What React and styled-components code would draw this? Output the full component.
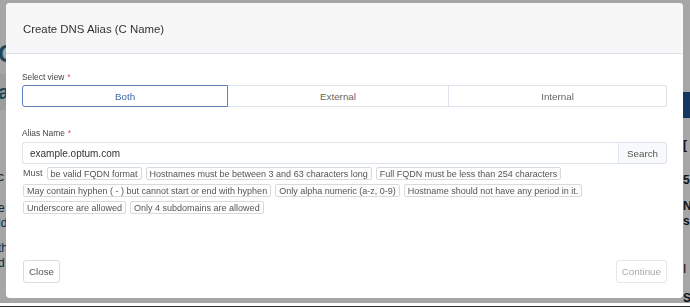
import React, { useState } from 'react';
import styled, { createGlobalStyle } from 'styled-components';

const GlobalStyle = createGlobalStyle`
  html, body {
    margin: 0;
    padding: 0;
    width: 690px;
    height: 307px;
    overflow: hidden;
    font-family: "Liberation Sans", Arial, sans-serif;
  }
`;

/* page that sits behind the dialog */
const Page = styled.div`
  display: flex;
  flex-direction: column;
  width: 690px;
  height: 307px;
  background: #fff;
`;

const PageBody = styled.div`
  flex: 1;
  display: flex;
  justify-content: space-between;
`;

const LeftCol = styled.div`
  display: flex;
  flex-direction: column;
  padding-top: 40px;
  margin-left: -2px;
  color: #1d3b50;
`;

const RightCol = styled.div`
  width: 7px;
  display: flex;
  flex-direction: column;
  padding-top: 92px;
  color: #14202c;
`;

const BigLetter = styled.div`
  font-size: 24px;
  font-weight: bold;
  color: #2c6c8c;
  height: ${(p) => p.h || 30}px;
`;

const Band = styled.div`
  background: ${(p) => p.bg || '#eef1f4'};
  height: ${(p) => p.h}px;
  font-size: ${(p) => p.size || 20}px;
  font-weight: bold;
  color: #2c6c8c;
  display: flex;
  align-items: center;
`;

const Line = styled.div`
  font-size: 12px;
  line-height: 15px;
  height: ${(p) => p.h || 15}px;
  font-weight: ${(p) => (p.bold ? 'bold' : 'normal')};
`;

const Taskbar = styled.div`
  height: 4px;
  background: #2e2e2e;
  position: relative;
  z-index: 2;
`;

const Backdrop = styled.div`
  position: fixed;
  inset: 0 0 4px 0;
  background: rgba(0, 0, 0, 0.35);
  display: flex;
  align-items: flex-start;
  padding: 3px 7px 0 6px;
`;

const Modal = styled.div`
  flex: 1;
  height: 295px;
  background: #fff;
  border-radius: 4px;
  display: flex;
  flex-direction: column;
  overflow: hidden;
`;

const Header = styled.div`
  height: 50px;
  background: #f7f7f7;
  border-bottom: 1px solid #dbe3ec;
  display: flex;
  align-items: center;
  padding: 0 17px;
`;

const Title = styled.h4`
  margin: 2px 0 0;
  font-size: 11.4px;
  font-weight: normal;
  color: #333;
`;

const Body = styled.div`
  flex: 1;
  padding: 18px 16px 0 16px;
  display: flex;
  flex-direction: column;
`;

const Label = styled.div`
  font-size: 8.4px;
  color: #444;
  height: 12px;
  margin-top: ${(p) => p.mt || 0}px;
  span {
    color: #d9534f;
    margin-left: 3px;
  }
`;

const Segmented = styled.div`
  display: grid;
  grid-template-columns: 206px 221px 1fr;
  height: 22px;
  margin-top: 1px;
`;

const Segment = styled.button`
  font-family: inherit;
  font-size: 9.8px;
  padding: 0;
  margin: 0;
  background: #fff;
  cursor: pointer;
  color: ${(p) => (p.active ? '#3d6aa3' : '#666')};
  border: 1px solid ${(p) => (p.active ? '#5b82b8' : '#dce3ea')};
  border-left-width: ${(p) => (p.first || p.active ? 1 : 0)}px;
  border-radius: ${(p) => (p.first ? '3px 0 0 3px' : p.last ? '0 3px 3px 0' : '0')};
  position: relative;
  z-index: ${(p) => (p.active ? 1 : 0)};
`;

const InputGroup = styled.div`
  display: flex;
  height: 22px;
  margin-top: 2px;
`;

const TextInput = styled.input`
  flex: 1;
  font-family: inherit;
  font-size: 10px;
  color: #333;
  border: 1px solid #dce3ea;
  border-right: none;
  border-radius: 3px 0 0 3px;
  padding: 0 7px;
  outline: none;
`;

const AddonButton = styled.button`
  width: 49px;
  font-family: inherit;
  font-size: 9.8px;
  color: #555;
  background: #f8f9fa;
  border: 1px solid #dce3ea;
  border-radius: 0 3px 3px 0;
  padding: 0;
`;

const Rules = styled.div`
  display: flex;
  flex-wrap: wrap;
  column-gap: 4px;
  row-gap: 4px;
  margin-top: 3px;
  padding-left: 1px;
  width: 580px;
`;

const RuleText = styled.span`
  font-size: 9px;
  color: #555;
  height: 13px;
  line-height: 13px;
`;

const Tag = styled.span`
  font-size: 9px;
  color: #555;
  height: 13px;
  line-height: 12px;
  padding: 0 3px;
  border: 1px solid #d6dbe0;
  border-radius: 2px;
  background: #fdfdfd;
  box-sizing: border-box;
  white-space: nowrap;
`;

const Footer = styled.div`
  display: flex;
  justify-content: space-between;
  padding: 0 16px 15px 17px;
`;

const Button = styled.button`
  height: 23px;
  padding: 0 5px;
  font-family: inherit;
  font-size: 9.8px;
  background: #fff;
  color: ${(p) => (p.disabled ? '#a9a9a9' : '#555')};
  border: 1px solid ${(p) => (p.disabled ? '#e2e7ec' : '#d6dde5')};
  border-radius: 3px;
  cursor: ${(p) => (p.disabled ? 'default' : 'pointer')};
`;

const views = ['Both', 'External', 'Internal'];

const rules = [
  'be valid FQDN format',
  'Hostnames must be between 3 and 63 characters long',
  'Full FQDN must be less than 254 characters',
  'May contain hyphen ( - ) but cannot start or end with hyphen',
  'Only alpha numeric (a-z, 0-9)',
  'Hostname should not have any period in it.',
  'Underscore are allowed',
  'Only 4 subdomains are allowed',
];

export default function App() {
  const [view, setView] = useState('Both');
  const [alias, setAlias] = useState('example.optum.com');

  return (
    <>
      <GlobalStyle />
      <Page>
        <PageBody>
          <LeftCol>
            <BigLetter h={34}>C</BigLetter>
            <Band h={36} size={20}>a</Band>
            <Line h={60} />
            <Line>c</Line>
            <Line h={16} />
            <Line>e:</Line>
            <Line>ld</Line>
            <Line h={10} />
            <Line>th</Line>
            <Line>d</Line>
          </LeftCol>
          <RightCol>
            <Band h={26} bg="#1f5596" />
            <Line h={20} />
            <Line bold>[</Line>
            <Line h={20} />
            <Line bold>5</Line>
            <Line h={11} />
            <Line bold>N</Line>
            <Line bold>s</Line>
            <Line h={33} />
            <Line>I</Line>
            <Line h={14} />
            <Line bold>S</Line>
          </RightCol>
        </PageBody>
        <Taskbar />
      </Page>

      <Backdrop>
        <Modal>
          <Header>
            <Title>Create DNS Alias (C Name)</Title>
          </Header>
          <Body>
            <Label>
              Select view<span>*</span>
            </Label>
            <Segmented>
              {views.map((v, i) => (
                <Segment
                  key={v}
                  active={view === v}
                  first={i === 0}
                  last={i === views.length - 1}
                  onClick={() => setView(v)}
                >
                  {v}
                </Segment>
              ))}
            </Segmented>

            <Label mt={21}>
              Alias Name<span>*</span>
            </Label>
            <InputGroup>
              <TextInput value={alias} onChange={(e) => setAlias(e.target.value)} />
              <AddonButton>Search</AddonButton>
            </InputGroup>
            <Rules>
              <RuleText>Must</RuleText>
              {rules.map((r) => (
                <Tag key={r}>{r}</Tag>
              ))}
            </Rules>
          </Body>
          <Footer>
            <Button>Close</Button>
            <Button disabled>Continue</Button>
          </Footer>
        </Modal>
      </Backdrop>
    </>
  );
}
